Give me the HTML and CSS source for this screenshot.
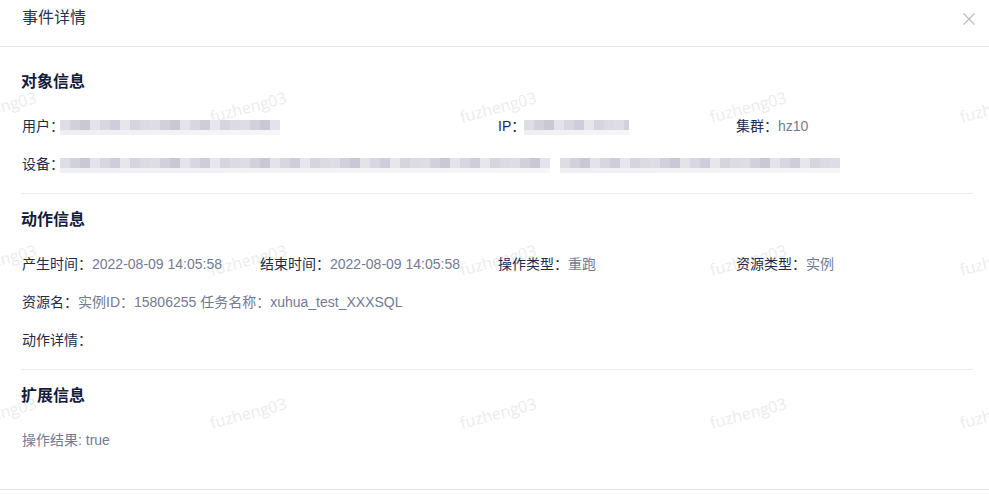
FILE: index.html
```html
<!DOCTYPE html>
<html lang="zh-CN">
<head>
    <meta charset="UTF-8">
    <meta name="viewport" content="width=device-width, initial-scale=1.0">
    <title>事件详情</title>
    <link rel="stylesheet" href="styles.css">
</head>
<body>
    <div class="modal">
        <div class="wm-layer">
            <span>fuzheng03</span><span>fuzheng03</span><span>fuzheng03</span><span>fuzheng03</span><span>fuzheng03</span>
            <span>fuzheng03</span><span>fuzheng03</span><span>fuzheng03</span><span>fuzheng03</span><span>fuzheng03</span>
            <span>fuzheng03</span><span>fuzheng03</span><span>fuzheng03</span><span>fuzheng03</span><span>fuzheng03</span>
        </div>

        <div class="modal-header">
            <span class="modal-title">事件详情</span>
            <button class="modal-close" aria-label="关闭">
                <svg width="12" height="12" viewBox="0 0 12 12">
                    <path d="M0.5 0.5 L11.5 11.5 M11.5 0.5 L0.5 11.5" stroke="#bcbcc4" stroke-width="1.2" fill="none"/>
                </svg>
            </button>
        </div>

        <div class="modal-body">
            <section class="info-section first">
                <h3 class="section-title">对象信息</h3>
                <div class="field-grid">
                    <div class="field span-2">
                        <span class="field-label">用户：</span><span class="masked masked-user"></span>
                    </div>
                    <div class="field">
                        <span class="field-label">IP：</span><span class="masked masked-ip"></span>
                    </div>
                    <div class="field">
                        <span class="field-label">集群：</span><span class="field-value">hz10</span>
                    </div>
                    <div class="field span-4">
                        <span class="field-label">设备：</span><span class="masked masked-device"></span><span class="masked masked-device-2"></span>
                    </div>
                </div>
            </section>

            <section class="info-section">
                <h3 class="section-title">动作信息</h3>
                <div class="field-grid">
                    <div class="field">
                        <span class="field-label">产生时间：</span><span class="field-value">2022-08-09 14:05:58</span>
                    </div>
                    <div class="field">
                        <span class="field-label">结束时间：</span><span class="field-value">2022-08-09 14:05:58</span>
                    </div>
                    <div class="field">
                        <span class="field-label">操作类型：</span><span class="field-value">重跑</span>
                    </div>
                    <div class="field">
                        <span class="field-label">资源类型：</span><span class="field-value">实例</span>
                    </div>
                    <div class="field span-4">
                        <span class="field-label">资源名：</span><span class="field-value">实例ID：15806255 任务名称：xuhua_test_XXXSQL</span>
                    </div>
                    <div class="field span-4">
                        <span class="field-label">动作详情：</span><span class="field-value"></span>
                    </div>
                </div>
            </section>

            <section class="info-section last">
                <h3 class="section-title">扩展信息</h3>
                <div class="field-grid">
                    <div class="field span-4">
                        <span class="field-value">操作结果: true</span>
                    </div>
                </div>
            </section>
        </div>

        <div class="modal-footer"></div>
    </div>
</body>
</html>
```

FILE: styles.css
```css
body {
    margin: 0;
    padding: 0;
    background: #ffffff;
    font-family: "Liberation Sans", "Noto Sans CJK SC", sans-serif;
    font-size: 14px;
    color: #222b4d;
}
.modal {
    position: relative;
    width: 989px;
    height: 495px;
    overflow: hidden;
    background: #ffffff;
}
/* faint watermark tiles laid over the dialog */
.wm-layer {
    position: absolute;
    left: -127px;
    top: 30px;
    display: grid;
    grid-template-columns: repeat(5, 250px);
    grid-template-rows: repeat(3, 153px);
    pointer-events: none;
    z-index: 0;
}
.wm-layer span {
    display: flex;
    align-items: center;
    justify-content: center;
    font-family: "Open Sans", sans-serif;
    font-size: 16px;
    color: #ececec;
    transform: rotate(-15deg);
}
.modal-header {
    position: relative;
    z-index: 1;
    border-bottom: 1px solid #e4e4ec;
    padding: 6px 14px 0 22px;
    display: flex;
    justify-content: space-between;
    align-items: flex-start;
    height: 40px;
}
.modal-title {
    font-size: 16px;
    line-height: 24px;
    color: #2b3352;
}
.modal-close {
    border: none;
    background: none;
    padding: 0;
    margin-top: 7px;
    width: 12px;
    height: 12px;
    cursor: pointer;
    display: flex;
}
.modal-body {
    position: relative;
    z-index: 1;
    padding: 0 16px 0 21px;
}
.info-section {
    padding: 14px 0 18px;
    border-bottom: 1px solid #ebebf0;
}
.info-section.first {
    padding-top: 23px;
}
.info-section.last {
    border-bottom: none;
    padding-bottom: 38px;
}
.section-title {
    margin: 0 0 21px;
    font-size: 16px;
    line-height: 24px;
    font-weight: bold;
    color: #131c3c;
}
.field-grid {
    display: grid;
    grid-template-columns: repeat(4, 238px);
    row-gap: 16px;
    padding-left: 1px;
}
.field {
    line-height: 22px;
    height: 22px;
    white-space: nowrap;
    display: flex;
    align-items: center;
}
.span-2 {
    grid-column: span 2;
}
.span-4 {
    grid-column: span 4;
}
.field-label {
    color: #222b4d;
}
.field-value {
    color: #737a95;
}
.masked {
    display: inline-block;
    height: 15px;
    margin-top: 3px;
    margin-left: -4px;
    background:
        repeating-linear-gradient(90deg,
            #dcdde5 0 10px, #d0d1db 10px 20px, #c8c9d5 20px 30px,
            #e3e4ea 30px 40px, #d6d7e0 40px 50px, #cdced9 50px 60px,
            #e6e6ec 60px 70px, #d4d5df 70px 80px, #dadbe3 80px 90px) top left / 100% 10px no-repeat,
        linear-gradient(90deg, #efeff3, #f6f6f8) bottom left / 100% 5px no-repeat;
}
.masked-user {
    width: 220px;
}
.masked-ip {
    width: 105px;
    margin-left: -1px;
}
.masked-device {
    width: 490px;
}
.masked-device-2 {
    width: 280px;
    margin-left: 10px;
}
.modal-footer {
    border-top: 1px solid #e6e6ec;
}
```
